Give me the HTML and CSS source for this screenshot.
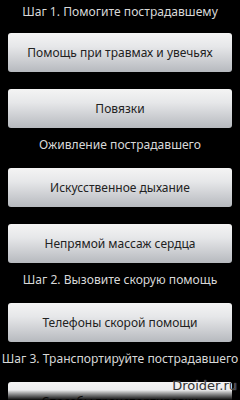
FILE: index.html
```html
<!DOCTYPE html>
<html>
<head>
<meta charset="utf-8">
<link rel="stylesheet" href="styles.css">
</head>
<body>
<div class="screen">
  <div class="list">
    <div class="heading first">Шаг 1. Помогите пострадавшему</div>
    <div class="btn">Помощь при травмах и увечьях</div>
    <div class="btn">Повязки</div>
    <div class="heading">Оживление пострадавшего</div>
    <div class="btn">Искусственное дыхание</div>
    <div class="btn">Непрямой массаж сердца</div>
    <div class="heading">Шаг 2. Вызовите скорую помощь</div>
    <div class="btn">Телефоны скорой помощи</div>
    <div class="heading">Шаг 3. Транспортируйте пострадавшего</div>
    <div class="btn">Способы транспортировки</div>
  </div>
  <div class="fade"></div>
  <div class="watermark">Droider.ru</div>
</div>
</body>
</html>
```
FILE: styles.css
```css
html, body {
  margin: 0;
  padding: 0;
  background: #000;
}
.screen {
  position: relative;
  width: 240px;
  height: 400px;
  overflow: hidden;
  background: #000;
  font-family: "Noto Sans", "Open Sans", sans-serif;
}
.list {
  display: flex;
  flex-direction: column;
}
.heading {
  box-sizing: border-box;
  height: 40px;
  padding: 8px 0 14px;
  color: #d8d8d8;
  font-size: 12.1px;
  line-height: 18px;
  text-align: center;
  white-space: nowrap;
}
.heading.first {
  height: 33px;
  padding: 3px 0 12px;
}
.btn {
  flex: none;
  height: 39px;
  margin: 0 8px;
  border-radius: 3px;
  background: linear-gradient(#f4f4f4 0%, #e6e7e9 35%, #c9cbcf 75%, #b6b9be 100%);
  color: #222;
  font-size: 12px;
  display: flex;
  align-items: center;
  justify-content: center;
  white-space: nowrap;
}
.btn + .btn {
  margin-top: 17px;
}
.fade {
  position: absolute;
  left: 0;
  right: 0;
  bottom: 0;
  height: 10px;
  background: linear-gradient(rgba(0,0,0,0), rgba(0,0,0,0.95));
}
.watermark {
  position: absolute;
  right: 3px;
  top: 377px;
  font-family: "DejaVu Sans", sans-serif;
  font-size: 13px;
  line-height: 18px;
  color: #333;
  text-shadow: 0 0 1px #eee;
}
```
